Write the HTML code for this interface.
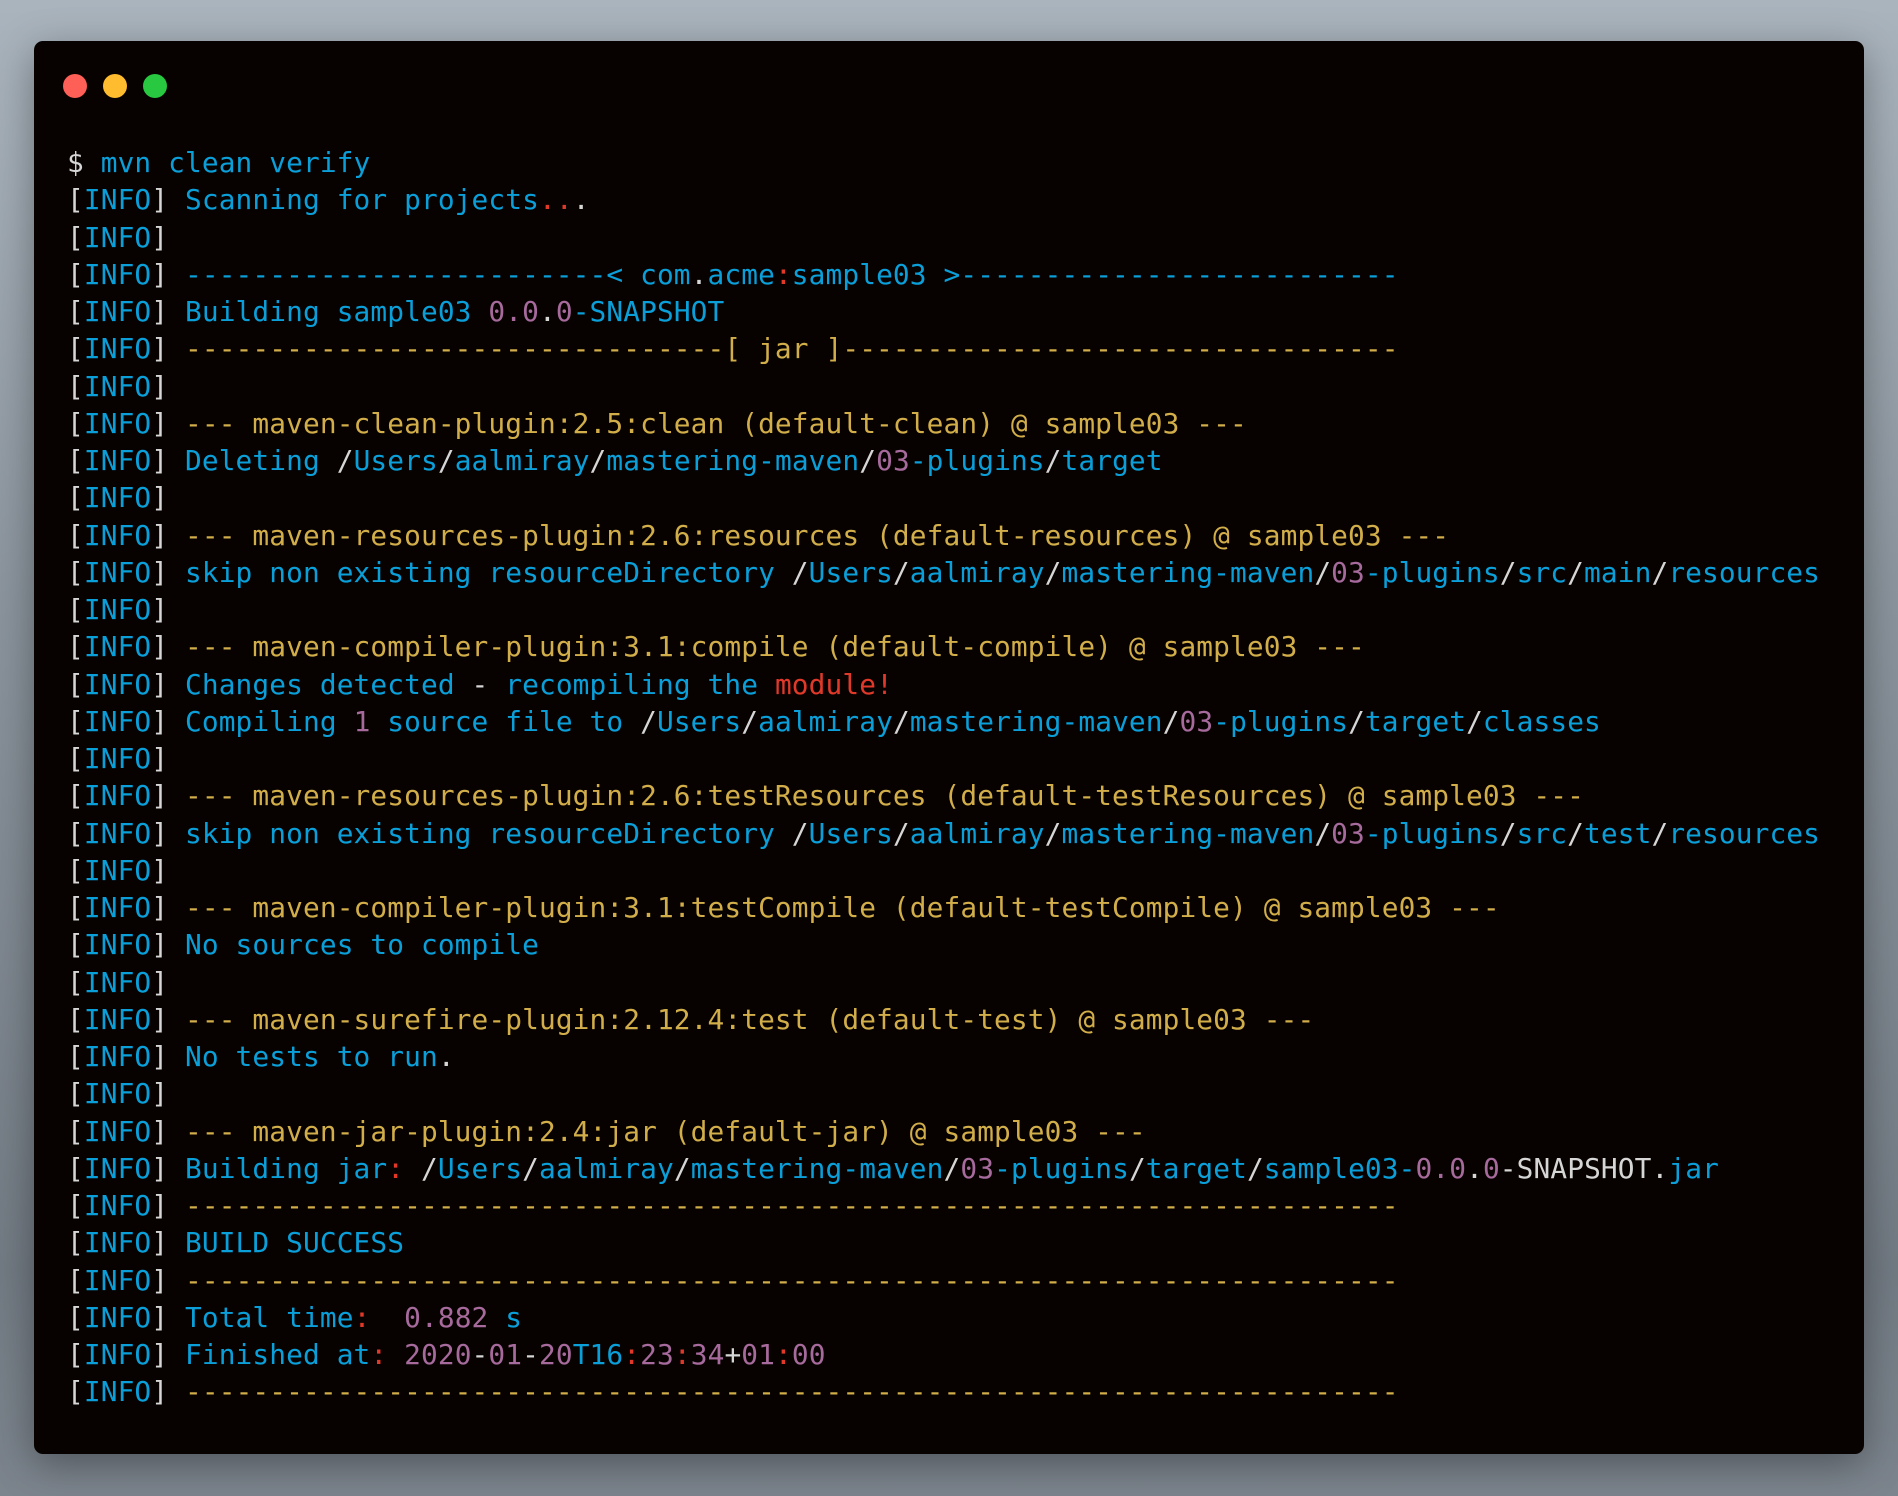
<!DOCTYPE html>
<html><head><meta charset="utf-8"><style>
html,body{margin:0;padding:0}
body{width:1898px;height:1496px;overflow:hidden;background:radial-gradient(ellipse at 50% 45%,#7d858e 0%,#6f7780 55%,#98a2ab 100%);position:relative}
.bg{position:absolute;inset:0;background:linear-gradient(180deg,#aab4bd 0%,#8b949d 40%,#727a83 85%,#7c848d 100%)}
.win{position:absolute;left:34px;top:41px;width:1830px;height:1413px;background:#070200;border-radius:9px;box-shadow:0 10px 40px rgba(0,0,0,.35)}
.dot{position:absolute;top:74px;width:24px;height:24px;border-radius:50%}
pre{position:absolute;left:67px;top:144px;margin:0;font-family:"DejaVu Sans Mono","Liberation Mono",monospace;font-size:27.8px;letter-spacing:0.12px;line-height:37.25px;color:#0a9fd9}
.w{color:#d6d6d6}.y{color:#d2ae4a}.p{color:#a66a9c}.r{color:#e0392a}
</style></head><body><div class="bg"></div>
<div class="win"></div>
<div class="dot" style="left:63px;background:#fe5f57"></div>
<div class="dot" style="left:103px;background:#febc2e"></div>
<div class="dot" style="left:143px;background:#28c840"></div>
<pre><span class="w">$</span> mvn clean verify
<span class="w">[</span>INFO<span class="w">]</span> Scanning for projects<span class="r">..</span><span class="w">.</span>
<span class="w">[</span>INFO<span class="w">]</span>
<span class="w">[</span>INFO<span class="w">]</span> -------------------------&lt; com<span class="w">.</span>acme<span class="r">:</span>sample03 &gt;--------------------------
<span class="w">[</span>INFO<span class="w">]</span> Building sample03 <span class="p">0.0</span><span class="w">.</span><span class="p">0</span>-SNAPSHOT
<span class="w">[</span>INFO<span class="w">]</span> <span class="y">--------------------------------[ jar ]---------------------------------</span>
<span class="w">[</span>INFO<span class="w">]</span>
<span class="w">[</span>INFO<span class="w">]</span> <span class="y">--- maven-clean-plugin:2.5:clean (default-clean) @ sample03 ---</span>
<span class="w">[</span>INFO<span class="w">]</span> Deleting <span class="w">/</span>Users<span class="w">/</span>aalmiray<span class="w">/</span>mastering-maven<span class="w">/</span><span class="p">03</span>-plugins<span class="w">/</span>target
<span class="w">[</span>INFO<span class="w">]</span>
<span class="w">[</span>INFO<span class="w">]</span> <span class="y">--- maven-resources-plugin:2.6:resources (default-resources) @ sample03 ---</span>
<span class="w">[</span>INFO<span class="w">]</span> skip non existing resourceDirectory <span class="w">/</span>Users<span class="w">/</span>aalmiray<span class="w">/</span>mastering-maven<span class="w">/</span><span class="p">03</span>-plugins<span class="w">/</span>src<span class="w">/</span>main<span class="w">/</span>resources
<span class="w">[</span>INFO<span class="w">]</span>
<span class="w">[</span>INFO<span class="w">]</span> <span class="y">--- maven-compiler-plugin:3.1:compile (default-compile) @ sample03 ---</span>
<span class="w">[</span>INFO<span class="w">]</span> Changes detected <span class="w">-</span> recompiling the <span class="r">module!</span>
<span class="w">[</span>INFO<span class="w">]</span> Compiling <span class="p">1</span> source file to <span class="w">/</span>Users<span class="w">/</span>aalmiray<span class="w">/</span>mastering-maven<span class="w">/</span><span class="p">03</span>-plugins<span class="w">/</span>target<span class="w">/</span>classes
<span class="w">[</span>INFO<span class="w">]</span>
<span class="w">[</span>INFO<span class="w">]</span> <span class="y">--- maven-resources-plugin:2.6:testResources (default-testResources) @ sample03 ---</span>
<span class="w">[</span>INFO<span class="w">]</span> skip non existing resourceDirectory <span class="w">/</span>Users<span class="w">/</span>aalmiray<span class="w">/</span>mastering-maven<span class="w">/</span><span class="p">03</span>-plugins<span class="w">/</span>src<span class="w">/</span>test<span class="w">/</span>resources
<span class="w">[</span>INFO<span class="w">]</span>
<span class="w">[</span>INFO<span class="w">]</span> <span class="y">--- maven-compiler-plugin:3.1:testCompile (default-testCompile) @ sample03 ---</span>
<span class="w">[</span>INFO<span class="w">]</span> No sources to compile
<span class="w">[</span>INFO<span class="w">]</span>
<span class="w">[</span>INFO<span class="w">]</span> <span class="y">--- maven-surefire-plugin:2.12.4:test (default-test) @ sample03 ---</span>
<span class="w">[</span>INFO<span class="w">]</span> No tests to run<span class="w">.</span>
<span class="w">[</span>INFO<span class="w">]</span>
<span class="w">[</span>INFO<span class="w">]</span> <span class="y">--- maven-jar-plugin:2.4:jar (default-jar) @ sample03 ---</span>
<span class="w">[</span>INFO<span class="w">]</span> Building jar<span class="r">:</span> <span class="w">/</span>Users<span class="w">/</span>aalmiray<span class="w">/</span>mastering-maven<span class="w">/</span><span class="p">03</span>-plugins<span class="w">/</span>target<span class="w">/</span>sample03-<span class="p">0.0</span><span class="w">.</span><span class="p">0</span><span class="w">-SNAPSHOT.</span>jar
<span class="w">[</span>INFO<span class="w">]</span> <span class="y">------------------------------------------------------------------------</span>
<span class="w">[</span>INFO<span class="w">]</span> BUILD SUCCESS
<span class="w">[</span>INFO<span class="w">]</span> <span class="y">------------------------------------------------------------------------</span>
<span class="w">[</span>INFO<span class="w">]</span> Total time<span class="r">:</span>  <span class="p">0.882</span> s
<span class="w">[</span>INFO<span class="w">]</span> Finished at<span class="r">:</span> <span class="p">2020</span><span class="w">-</span><span class="p">01</span><span class="w">-</span><span class="p">20</span>T16<span class="r">:</span><span class="p">23</span><span class="r">:</span><span class="p">34</span><span class="w">+</span><span class="p">01</span><span class="r">:</span><span class="p">00</span>
<span class="w">[</span>INFO<span class="w">]</span> <span class="y">------------------------------------------------------------------------</span></pre>
</body></html>
